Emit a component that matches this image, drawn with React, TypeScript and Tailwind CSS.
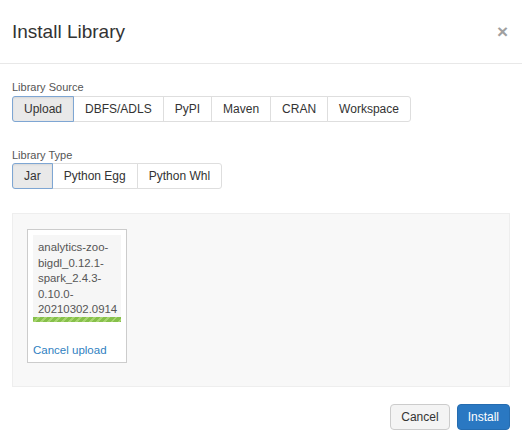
import { useState } from "react";

const sources = ["Upload", "DBFS/ADLS", "PyPI", "Maven", "CRAN", "Workspace"];
const types = ["Jar", "Python Egg", "Python Whl"];

function ButtonGroup({ items, active, onPick }: { items: string[]; active: string; onPick: (v: string) => void }) {
    return (
        <div className="flex">
            {items.map((it, i) => (
                <button key={it} onClick={() => onPick(it)}
                    className={`relative h-[26px] px-[11px] text-[12px] leading-[18px] text-[#333] border ${i > 0 ? "-ml-px" : ""} ${i === 0 ? "rounded-l-[3px]" : ""} ${i === items.length - 1 ? "rounded-r-[3px]" : ""} ${it === active ? "z-10 bg-[#e9e9e9] border-[#7ea6d3] shadow-[inset_0_1px_2px_rgba(0,0,0,0.08)]" : "bg-white border-[#dedede]"}`}>
                    {it}
                </button>
            ))}
        </div>
    );
}

export default function App() {
    const [source, setSource] = useState("Upload");
    const [type, setType] = useState("Jar");

    return (
        <div className="w-[522px] h-[441px] bg-white text-[#333] font-['Liberation_Sans',Arial,sans-serif]">
            <div className="h-[64px] border-b border-[#e8e8e8] pl-3 pr-[14px] flex items-center justify-between">
                <h1 className="text-[19px] text-[#333] leading-none pb-px">Install Library</h1>
                <button className="text-[19px] font-bold leading-none text-[#a0a0a0]">×</button>
            </div>

            <div className="px-3 pt-4">
                <div className="text-[11px] leading-[15.7px] text-[#555]">Library Source</div>
                <ButtonGroup items={sources} active={source} onPick={setSource} />

                <div className="mt-[26px] text-[11px] leading-[15.7px] text-[#555]">Library Type</div>
                <ButtonGroup items={types} active={type} onPick={setType} />

                <div className="mt-[24px] h-[174px] bg-[#f8f8f8] border border-[#eeeeee] pt-[15px] pl-[14px]">
                    <div className="w-[100px] h-[134px] bg-white border border-[#cccccc] p-[5px] flex flex-col">
                        <div className="bg-[#f6f6f6] pt-[5px]">
                            <div className="px-[5px] text-[11.4px] leading-[15.4px] text-[#555] whitespace-nowrap">
                                <div>analytics-zoo-</div>
                                <div>bigdl_0.12.1-</div>
                                <div>spark_2.4.3-</div>
                                <div>0.10.0-</div>
                                <div>20210302.0914</div>
                            </div>
                            <div className="h-[5px] bg-[repeating-linear-gradient(135deg,#86c04a_0px,#86c04a_3px,#a7d46f_3px,#a7d46f_5px)]" />
                        </div>
                        <a href="#" className="mt-[21px] text-[11.5px] leading-[15.7px] text-[#2f7fc1]">Cancel upload</a>
                    </div>
                </div>

                <div className="mt-[17px] flex justify-end gap-[7px]">
                    <button className="h-[26px] px-[10px] text-[12px] text-[#333] bg-[#f4f4f4] border border-[#cccccc] rounded-[4px]">Cancel</button>
                    <button className="h-[26px] px-[10px] text-[12px] text-white bg-[#2a78c2] border border-[#256cb0] rounded-[4px]">Install</button>
                </div>
            </div>
        </div>
    );
}
